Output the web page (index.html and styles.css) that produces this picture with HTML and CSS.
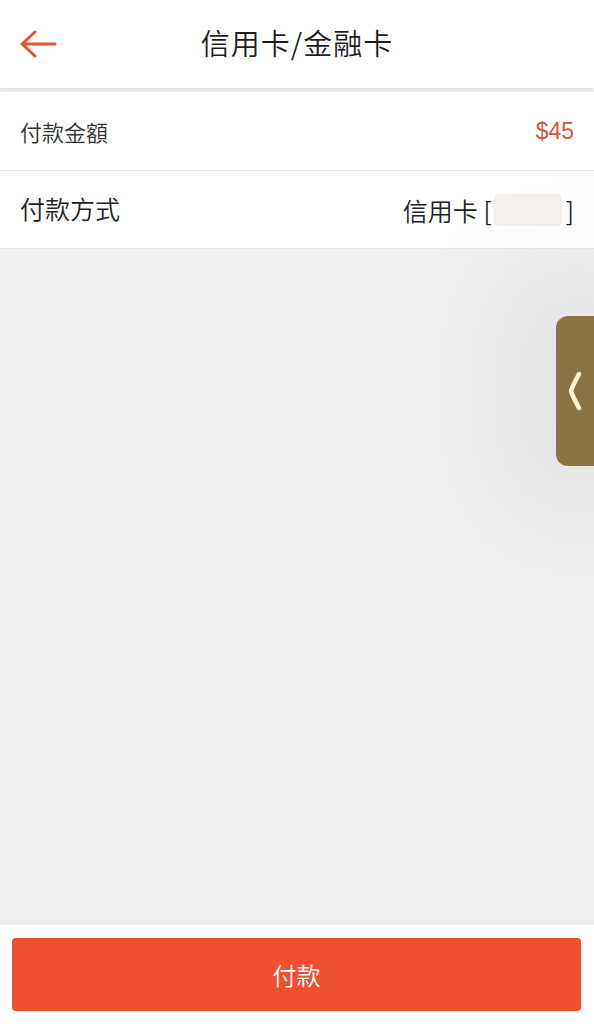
FILE: index.html
```html
<!DOCTYPE html>
<html lang="zh-Hant">
<head>
  <meta charset="UTF-8" />
  <meta name="viewport" content="width=device-width, initial-scale=1.0" />
  <title>信用卡/金融卡</title>
  <link rel="stylesheet" href="styles.css">
</head>
<body>
  <div class="page">
    <div class="top-bar">
      <div class="back-btn">
        <svg width="38" height="30" viewBox="0 0 38 30">
          <path d="M16 3 L3 15 L16 27 M3 15 L36 15" fill="none" stroke="#e5522f" stroke-width="3" stroke-linecap="round" stroke-linejoin="round"/>
        </svg>
      </div>
      <div class="top-title">信用卡/金融卡</div>
    </div>
    <div class="info-list">
      <div class="info-row amount-row">
        <span class="label">付款金額</span>
        <span class="amount">$45</span>
      </div>
      <div class="info-row method-row">
        <span class="label">付款方式</span>
        <span class="method">信用卡 [<span class="card-mask"></span>]</span>
      </div>
    </div>
    <div class="content-area">
      <div class="side-tab">
        <svg width="14" height="40" viewBox="0 0 14 40">
          <path d="M11 3 Q4 16 3 20 Q4 24 11 37" fill="none" stroke="#fff6d6" stroke-width="4.5" stroke-linecap="round" stroke-linejoin="round"/>
        </svg>
      </div>
    </div>
    <div class="footer">
      <button class="pay-btn">付款</button>
    </div>
  </div>
</body>
</html>
```

FILE: styles.css
```css
html, body {
  margin: 0;
  padding: 0;
}
body {
  font-family: "Noto Sans CJK TC", "Noto Sans", sans-serif;
  background-color: #efefef;
  color: #222;
}
.page {
  display: flex;
  flex-direction: column;
  height: 1024px;
  overflow: hidden;
}
.top-bar {
  height: 88px;
  background: #fff;
  position: relative;
  display: flex;
  align-items: center;
  justify-content: center;
  box-shadow: 0 2px 4px rgba(0,0,0,0.06);
  z-index: 2;
}
.back-btn {
  position: absolute;
  left: 19px;
  top: 29px;
  line-height: 0;
}
.top-title {
  font-size: 29px;
  font-weight: 350;
  color: #1e1e1e;
  letter-spacing: 1px;
  margin-top: -4px;
}
.info-list {
  margin-top: 4px;
  background: #fff;
}
.info-row {
  display: flex;
  justify-content: space-between;
  align-items: center;
  padding: 0 20px;
}
.amount-row {
  height: 78px;
  border-bottom: 1px solid #e8e8e8;
}
.amount-row .label {
  font-size: 22px;
  font-weight: 350;
  color: #333;
}
.amount {
  font-family: "Liberation Sans", Arial, sans-serif;
  font-size: 23px;
  color: #d9573c;
}
.method-row {
  height: 78px;
  padding-bottom: 4px;
  box-sizing: border-box;
  border-bottom: 1px solid #e6e6e6;
}
.method-row .label {
  font-size: 25px;
  font-weight: 350;
  color: #222;
}
.method {
  font-size: 25px;
  font-weight: 350;
  color: #222;
  display: flex;
  align-items: center;
  margin-top: 4px;
}
.card-mask {
  display: inline-block;
  width: 68px;
  height: 32px;
  background: #f7f1ed;
  border-radius: 4px;
  margin: 0 4px 0 2px;
}
.content-area {
  flex: 1;
  position: relative;
  background: #efefef;
}
.side-tab {
  position: absolute;
  right: 0;
  top: 67px;
  width: 38px;
  height: 150px;
  background: #8a7542;
  border-radius: 12px 0 0 12px;
  display: flex;
  align-items: center;
  justify-content: center;
  box-shadow: 0 0 120px 60px rgba(0,0,0,0.05);
}
.footer {
  background: #fff;
  padding: 13px 13px 13px 12px;
  height: 99px;
  box-sizing: border-box;
}
.pay-btn {
  width: 100%;
  height: 73px;
  border: none;
  border-radius: 4px;
  background: #ee4f2e;
  color: #fff;
  font-family: "Noto Sans CJK TC", "Noto Sans", sans-serif;
  font-size: 24px;
  font-weight: 350;
}
```
